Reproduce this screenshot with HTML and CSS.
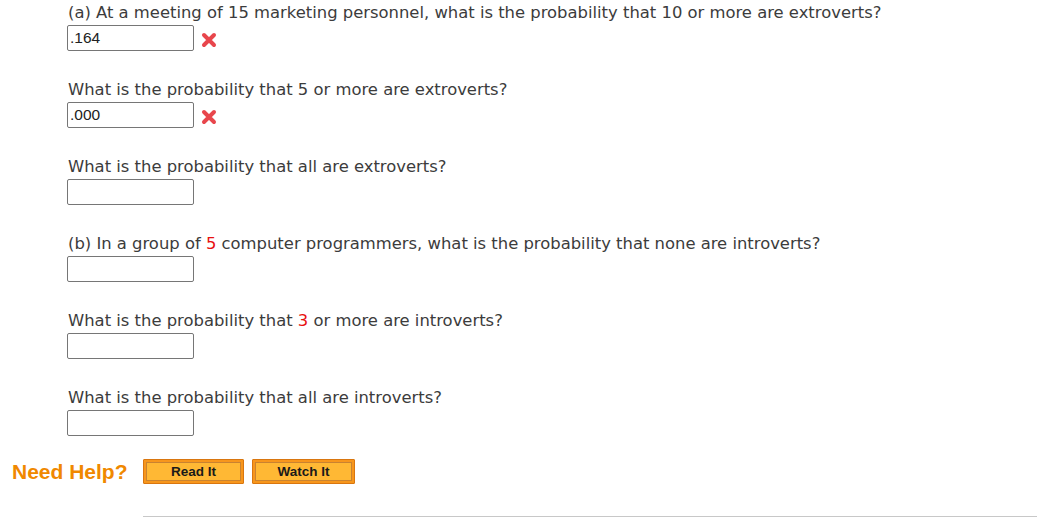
FILE: index.html
```html
<!DOCTYPE html>
<html>
<head>
<meta charset="utf-8">
<link rel="stylesheet" href="styles.css">
</head>
<body>
<div class="questions">
  <div class="q">
    <div class="qtext">(a) At a meeting of 15 marketing personnel, what is the probability that 10 or more are extroverts?</div>
    <div class="answer"><input class="box" type="text" value=".164"><span class="wrong"><svg width="16" height="16" viewBox="0 0 16 16"><path d="M3 3 L13 13 M13 3 L3 13" stroke="#e8464c" stroke-width="4" stroke-linecap="round"/></svg></span></div>
  </div>
  <div class="q">
    <div class="qtext">What is the probability that 5 or more are extroverts?</div>
    <div class="answer"><input class="box" type="text" value=".000"><span class="wrong"><svg width="16" height="16" viewBox="0 0 16 16"><path d="M3 3 L13 13 M13 3 L3 13" stroke="#e8464c" stroke-width="4" stroke-linecap="round"/></svg></span></div>
  </div>
  <div class="q">
    <div class="qtext">What is the probability that all are extroverts?</div>
    <div class="answer"><input class="box" type="text"></div>
  </div>
  <div class="q">
    <div class="qtext">(b) In a group of <span class="red">5</span> computer programmers, what is the probability that none are introverts?</div>
    <div class="answer"><input class="box" type="text"></div>
  </div>
  <div class="q">
    <div class="qtext">What is the probability that <span class="red">3</span> or more are introverts?</div>
    <div class="answer"><input class="box" type="text"></div>
  </div>
  <div class="q">
    <div class="qtext">What is the probability that all are introverts?</div>
    <div class="answer"><input class="box" type="text"></div>
  </div>
</div>
<div class="help">
  <span class="need">Need Help?</span>
  <button class="btn read">Read It</button>
  <button class="btn watch">Watch It</button>
</div>
<div class="rule"></div>
</body>
</html>
```
FILE: styles.css
```css
html, body {
  margin: 0;
  padding: 0;
  background: #fff;
}
body {
  font-family: "DejaVu Sans", Verdana, sans-serif;
  color: #3c3c3c;
  width: 1037px;
  height: 517px;
  overflow: hidden;
}
.questions {
  padding: 3px 0 0 68px;
  display: flex;
  flex-direction: column;
  gap: 29px;
}
.q {
  display: flex;
  flex-direction: column;
  gap: 2px;
}
.qtext {
  font-size: 16.4px;
  line-height: 20px;
  white-space: nowrap;
}
.red {
  color: #e8100f;
}
.answer {
  display: flex;
  align-items: center;
  height: 26px;
  margin-left: -1px;
}
.box {
  box-sizing: border-box;
  width: 127px;
  height: 26px;
  margin: 0;
  border: 1px solid #767676;
  border-radius: 2px;
  padding: 0 2px;
  font-family: "Liberation Sans", Arial, sans-serif;
  font-size: 15.5px;
  color: #222;
  background: #fff;
  outline: none;
}
.wrong {
  display: inline-flex;
  margin-left: 7px;
  margin-top: 3px;
}
.help {
  display: flex;
  align-items: center;
  margin-top: 23px;
  padding-left: 12px;
  height: 25px;
}
.need {
  font-family: "Liberation Sans", Arial, sans-serif;
  font-weight: bold;
  font-size: 21px;
  color: #f08800;
  width: 131px;
}
.btn {
  box-sizing: border-box;
  height: 25px;
  margin: 0 8px 0 0;
  padding: 0;
  font-family: "Liberation Sans", Arial, sans-serif;
  font-weight: bold;
  font-size: 13.5px;
  color: #1a1a1a;
  background: #ffb834;
  border: 1px solid #d9760f;
  box-shadow: inset 0 0 0 2px #f7961c, inset 0 0 0 3px #c98331;
  border-radius: 1px;
  cursor: pointer;
}
.read { width: 101px; }
.watch { width: 103px; }
.rule {
  margin: 32px 0 0 143px;
  height: 1px;
  background: #c8c8c8;
}
```
